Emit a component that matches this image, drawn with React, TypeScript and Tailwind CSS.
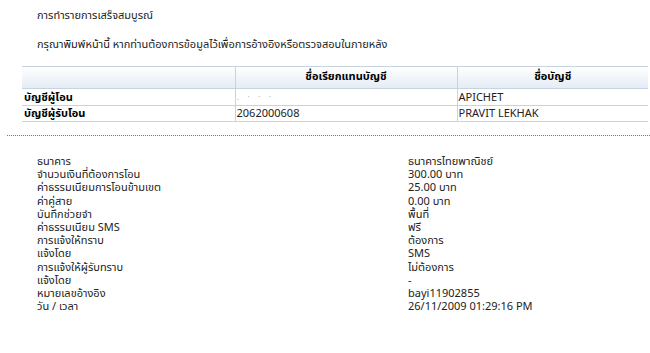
import React from "react";

const rows: [string, string][] = [
  ["ธนาคาร", "ธนาคารไทยพาณิชย์"],
  ["จำนวนเงินที่ต้องการโอน", "300.00 บาท"],
  ["ค่าธรรมเนียมการโอนข้ามเขต", "25.00 บาท"],
  ["ค่าคู่สาย", "0.00 บาท"],
  ["บันทึกช่วยจำ", "พื้นที่"],
  ["ค่าธรรมเนียม SMS", "ฟรี"],
  ["การแจ้งให้ทราบ", "ต้องการ"],
  ["แจ้งโดย", "SMS"],
  ["การแจ้งให้ผู้รับทราบ", "ไม่ต้องการ"],
  ["แจ้งโดย", "-"],
  ["หมายเลขอ้างอิง", "bayi11902855"],
  ["วัน / เวลา", "26/11/2009 01:29:16 PM"],
];

export default function App() {
  return (
    <div
      className="w-[650px] h-[353px] bg-white text-[11px] text-[#222] overflow-hidden"
      style={{ fontFamily: 'Tahoma, "Noto Sans Thai", Loma, "DejaVu Sans", sans-serif' }}
    >
      <div className="pl-[37px] pt-[9px] leading-[14px]">การทำรายการเสร็จสมบูรณ์</div>
      <div className="pl-[37px] pt-[15px] leading-[14px]">
        กรุณาพิมพ์หน้านี้ หากท่านต้องการข้อมูลไว้เพื่อการอ้างอิงหรือตรวจสอบในภายหลัง
      </div>
      <div className="pl-[22px] pt-[14px]">
        <table className="w-[626px] border-collapse text-[11px]">
          <thead>
            <tr className="h-[22px] bg-gradient-to-b from-white to-[#e3ebf4]">
              <th className="w-[213px] border border-[#c6d3e1] border-l-0"></th>
              <th className="w-[222px] border border-[#c6d3e1] font-bold text-center text-black">
                ชื่อเรียกแทนบัญชี
              </th>
              <th className="border border-[#c6d3e1] border-r-0 font-bold text-center text-black">
                ชื่อบัญชี
              </th>
            </tr>
          </thead>
          <tbody>
            <tr className="h-[16px]">
              <td className="border-b border-[#c6d3e1] font-bold text-black p-0 pl-[2px] leading-[15px]">บัญชีผู้โอน</td>
              <td className="border-b border-x border-[#c6d3e1] p-0 pl-[1px] leading-[15px] text-[#bbb]">
                <span className="text-[9px] tracking-[3px]">. · · ·</span>
              </td>
              <td className="border-b border-l border-[#c6d3e1] p-0 pl-[1px] leading-[15px]">APICHET</td>
            </tr>
            <tr className="h-[16px]">
              <td className="border-b border-[#c6d3e1] font-bold text-black p-0 pl-[2px] leading-[15px]">บัญชีผู้รับโอน</td>
              <td className="border-b border-x border-[#c6d3e1] p-0 pl-[1px] leading-[15px]">2062000608</td>
              <td className="border-b border-l border-[#c6d3e1] p-0 pl-[1px] leading-[15px]">PRAVIT LEKHAK</td>
            </tr>
          </tbody>
        </table>
      </div>
      <div className="ml-[7px] mt-[13px] border-t border-dotted border-[#777]"></div>
      <div className="pt-[19px] grid auto-rows-[13.2px]">
        {rows.map(([k, v], i) => (
          <div key={i} className="flex leading-[13px]">
            <div className="w-[408px] pl-[37px] shrink-0">{k}</div>
            <div>{v}</div>
          </div>
        ))}
      </div>
    </div>
  );
}
